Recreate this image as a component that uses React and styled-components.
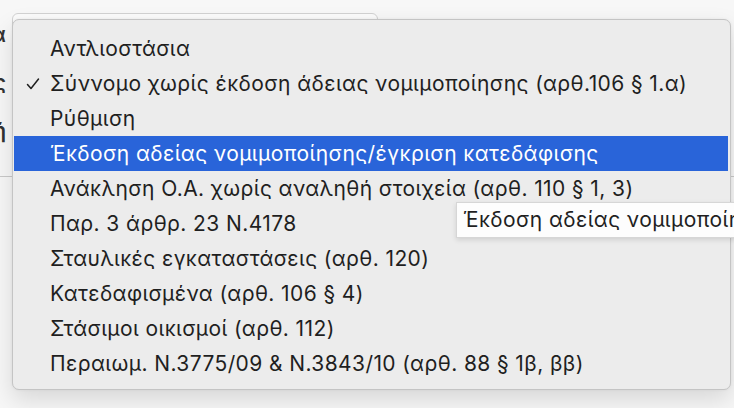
import React from 'react'
import styled, { createGlobalStyle } from 'styled-components'

const GlobalStyle = createGlobalStyle`
  html, body {
    margin: 0;
    padding: 0;
    background: #f7f7f7;
  }
  body {
    font-family: Inter, "Noto Sans", sans-serif;
    -webkit-font-smoothing: antialiased;
  }
`

const Page = styled.div`
  position: relative;
  width: 734px;
  height: 408px;
  overflow: hidden;
  background: #f7f7f7;
`

const Form = styled.div`
  display: flex;
  flex-direction: column;
  padding-top: 13px;
`

const FieldRow = styled.div`
  display: grid;
  grid-template-columns: 6px 366px;
  column-gap: 6px;
  height: 48px;
`

const Label = styled.div`
  direction: rtl;
  overflow: hidden;
  white-space: nowrap;
  font-size: 21px;
  font-weight: 600;
  color: #333333;
  line-height: 44px;
`

const SelectBox = styled.div`
  height: 30px;
  border: 1px solid #d2d2d2;
  border-radius: 6px;
  background: #fbfbfb;
`

const Divider = styled.div`
  margin-top: 19px;
  height: 1px;
  background: #c9c9c9;
`

const Menu = styled.div`
  position: absolute;
  left: 12px;
  top: 19px;
  width: 714px;
  padding: 11px 2px 8px 1px;
  background: #ececec;
  border: 1px solid #c4c4c4;
  border-radius: 7px;
  box-shadow: 0 10px 24px rgba(0, 0, 0, 0.13), 0 0 3px rgba(0, 0, 0, 0.06);
  display: flex;
  flex-direction: column;
`

const Item = styled.div`
  display: grid;
  grid-template-columns: 36px 1fr;
  align-items: center;
  height: 35px;
  font-size: 21px;
  letter-spacing: 0.4px;
  white-space: nowrap;
  color: ${(p) => (p.active ? '#ffffff' : '#1f1f1f')};
  background: ${(p) => (p.active ? '#2964d9' : 'transparent')};
`

const Check = styled.svg`
  margin-left: 12px;
  margin-bottom: 2px;
  width: 14px;
  height: 14px;
`

const Text = styled.span`
  line-height: 35px;
  padding-bottom: 2px;
`

const Tooltip = styled.div`
  position: absolute;
  left: 456px;
  top: 202px;
  height: 34px;
  padding: 0 8px 0 6px;
  background: #fdfdfd;
  border: 1px solid #d6d6d6;
  box-shadow: 0 2px 5px rgba(0, 0, 0, 0.12);
  font-size: 21px;
  letter-spacing: 0.4px;
  line-height: 33px;
  color: #1f1f1f;
  white-space: nowrap;
`

const items = [
  'Αντλιοστάσια',
  'Σύννομο χωρίς έκδοση άδειας νομιμοποίησης (αρθ.106 § 1.α)',
  'Ρύθμιση',
  'Έκδοση αδείας νομιμοποίησης/έγκριση κατεδάφισης',
  'Ανάκληση Ο.Α. χωρίς αναληθή στοιχεία (αρθ. 110 § 1, 3)',
  'Παρ. 3 άρθρ. 23 Ν.4178',
  'Σταυλικές εγκαταστάσεις (αρθ. 120)',
  'Κατεδαφισμένα (αρθ. 106 § 4)',
  'Στάσιμοι οικισμοί (αρθ. 112)',
  'Περαιωμ. Ν.3775/09 & Ν.3843/10 (αρθ. 88 § 1β, ββ)',
]

const checked = 1
const active = 3

const App = () => {
  return (
    <Page>
      <GlobalStyle />
      <Form>
        <FieldRow>
          <Label>Κατηγορία</Label>
          <SelectBox />
        </FieldRow>
        <FieldRow>
          <Label>Είδος</Label>
        </FieldRow>
        <FieldRow>
          <Label>Περιοχή</Label>
        </FieldRow>
        <Divider />
      </Form>

      <Menu>
        {items.map((text, i) => (
          <Item key={text} active={i === active}>
            {i === checked ? (
              <Check viewBox="0 0 14 14">
                <polyline
                  points="1.5,7.5 5,11.5 12.5,2"
                  fill="none"
                  stroke="#1f1f1f"
                  strokeWidth="1.5"
                  strokeLinecap="round"
                  strokeLinejoin="round"
                />
              </Check>
            ) : (
              <span />
            )}
            <Text>{text}</Text>
          </Item>
        ))}
      </Menu>

      <Tooltip>Έκδοση αδείας νομιμοποίησης/έγκριση κατεδάφισης</Tooltip>
    </Page>
  )
}

export default App
